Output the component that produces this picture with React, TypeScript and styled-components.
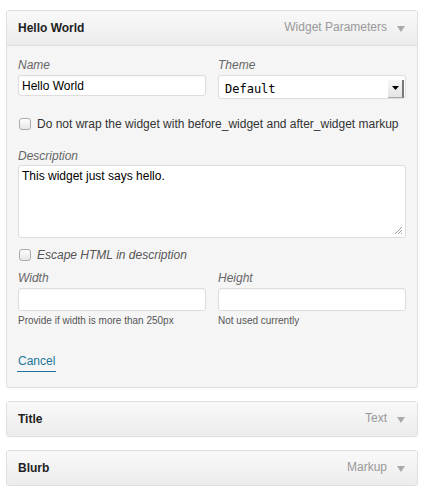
import React from "react";
import styled, { createGlobalStyle } from "styled-components";

const Global = createGlobalStyle`
  html, body { margin: 0; padding: 0; background: #fff; }
  body { font-family: "Liberation Sans", Arial, sans-serif; font-size: 12px; color: #333; }
  * { box-sizing: border-box; }
`;

const Page = styled.div`
  width: 426px;
  padding: 10px 8px 0 6px;
  display: flex;
  flex-direction: column;
  gap: 13px;
`;

const Panel = styled.div`
  border: 1px solid #dfdfdf;
  border-radius: 3px;
  background: #f5f5f5;
  box-shadow: 0 1px 0 rgba(0,0,0,0.02);
  overflow: hidden;
`;

const Header = styled.div<{ $open?: boolean }>`
  height: ${(p) => (p.$open ? 35 : 34)}px;
  display: flex;
  align-items: center;
  padding: 0 12px 0 11px;
  background: linear-gradient(to bottom, #f9f9f9, #ececec);
  border-bottom: ${(p) => (p.$open ? "1px solid #dfdfdf" : "none")};
`;

const HeaderTitle = styled.div`
  flex: 1;
  font-weight: bold;
  font-size: 12px;
  color: #222;
`;

const HeaderType = styled.div`
  color: #999;
  font-size: 12px;
  margin-right: 10px;
  margin-top: -2px;
`;

const Arrow = styled.svg`
  display: block;
  margin-top: 1px;
`;

const Body = styled.div`
  padding: 11px 11px 15px 11px;
  display: flex;
  flex-direction: column;
`;

const Columns = styled.div<{ $mt?: number }>`
  display: grid;
  grid-template-columns: 1fr 1fr;
  column-gap: 12px;
  margin-top: ${(p) => p.$mt ?? 0}px;
`;

const Field = styled.div`
  display: flex;
  flex-direction: column;
`;

const Label = styled.div<{ $mt?: number; $mb?: number }>`
  font-style: italic;
  color: #666;
  font-size: 12px;
  line-height: 16px;
  margin-top: ${(p) => p.$mt ?? 0}px;
  margin-bottom: ${(p) => p.$mb ?? 2}px;
`;

const TextInput = styled.div<{ $h?: number }>`
  height: ${(p) => p.$h ?? 21}px;
  background: #fff;
  border: 1px solid #ddd;
  border-radius: 3px;
  box-shadow: inset 0 1px 2px rgba(0,0,0,0.04);
  padding: 0 3px;
  display: flex;
  align-items: center;
  font-size: 12px;
  color: #000;
`;

const SelectBox = styled.div`
  height: 24px;
  background: #fff;
  border: 1px solid #ddd;
  border-radius: 3px;
  display: flex;
  align-items: center;
  padding: 0 1px 0 6px;
  font-family: "DejaVu Sans Mono", "Liberation Mono", monospace;
  font-size: 12px;
  color: #000;
`;

const SelectText = styled.span`
  flex: 1;
  margin-top: 3px;
`;

const SelectButton = styled.span`
  width: 16px;
  height: 18px;
  margin-top: 3px;
  background: linear-gradient(to bottom, #f7f7f7, #e4e4e4);
  border-right: 2px solid #777;
  border-bottom: 1px solid #aaa;
  display: flex;
  align-items: center;
  justify-content: center;
`;

const CheckRow = styled.label<{ $mt: number; $italic?: boolean }>`
  display: flex;
  align-items: center;
  gap: 6px;
  margin-top: ${(p) => p.$mt}px;
  line-height: 16px;
  font-size: 12px;
  color: ${(p) => (p.$italic ? "#555" : "#333")};
  font-style: ${(p) => (p.$italic ? "italic" : "normal")};
`;

const Check = styled.span`
  width: 12px;
  height: 12px;
  margin-left: 1px;
  border: 1px solid #aaa;
  border-radius: 3px;
  background: linear-gradient(to bottom, #fdfdfd, #e6e6e6);
  flex-shrink: 0;
`;

const TextArea = styled.div`
  height: 73px;
  background: #fff;
  border: 1px solid #ddd;
  border-radius: 3px;
  padding: 2px 3px;
  font-size: 12px;
  line-height: 16px;
  color: #000;
  position: relative;
`;

const Grip = styled.svg`
  position: absolute;
  right: 2px;
  bottom: 2px;
`;

const Hint = styled.div`
  font-size: 10px;
  color: #555;
  margin-top: 3px;
  line-height: 14px;
`;

const Actions = styled.div`
  margin-top: 25px;
  display: flex;
`;

const CancelLink = styled.a`
  color: #21759b;
  font-size: 12px;
  text-decoration: none;
  border-bottom: 1px solid #21759b;
  padding: 0 1px 2px 1px;
  margin-left: -1px;
  line-height: 16px;
`;

const DownArrow = () => (
  <Arrow width="8" height="6" viewBox="0 0 8 6">
    <path d="M0 0h8L4 6z" fill="#aaa" />
  </Arrow>
);

const CollapsedHeader = ({ title, type }: { title: string; type: string }) => (
  <Panel>
    <Header>
      <HeaderTitle>{title}</HeaderTitle>
      <HeaderType>{type}</HeaderType>
      <DownArrow />
    </Header>
  </Panel>
);

export default function App() {
  return (
    <>
      <Global />
      <Page>
        <Panel>
          <Header $open>
            <HeaderTitle>Hello World</HeaderTitle>
            <HeaderType>Widget Parameters</HeaderType>
            <DownArrow />
          </Header>
          <Body>
            <Columns>
              <Field>
                <Label>Name</Label>
                <TextInput>Hello World</TextInput>
              </Field>
              <Field>
                <Label>Theme</Label>
                <SelectBox>
                  <SelectText>Default</SelectText>
                  <SelectButton>
                    <svg width="7" height="4" viewBox="0 0 7 4">
                      <path d="M0 0h7L3.5 4z" fill="#000" />
                    </svg>
                  </SelectButton>
                </SelectBox>
              </Field>
            </Columns>
            <CheckRow $mt={17}>
              <Check />
              Do not wrap the widget with before_widget and after_widget markup
            </CheckRow>
            <Label $mt={16} $mb={1}>Description</Label>
            <TextArea>
              This widget just says hello.
              <Grip width="10" height="10" viewBox="0 0 10 10">
                <path d="M9 2L2 9M9 5L5 9M9 8L8 9" stroke="#999" strokeWidth="1" />
              </Grip>
            </TextArea>
            <CheckRow $mt={9} $italic>
              <Check />
              Escape HTML in description
            </CheckRow>
            <Columns $mt={7}>
              <Field>
                <Label>Width</Label>
                <TextInput $h={23} />
                <Hint>Provide if width is more than 250px</Hint>
              </Field>
              <Field>
                <Label>Height</Label>
                <TextInput $h={23} />
                <Hint>Not used currently</Hint>
              </Field>
            </Columns>
            <Actions>
              <CancelLink href="#">Cancel</CancelLink>
            </Actions>
          </Body>
        </Panel>
        <CollapsedHeader title="Title" type="Text" />
        <CollapsedHeader title="Blurb" type="Markup" />
      </Page>
    </>
  );
}
